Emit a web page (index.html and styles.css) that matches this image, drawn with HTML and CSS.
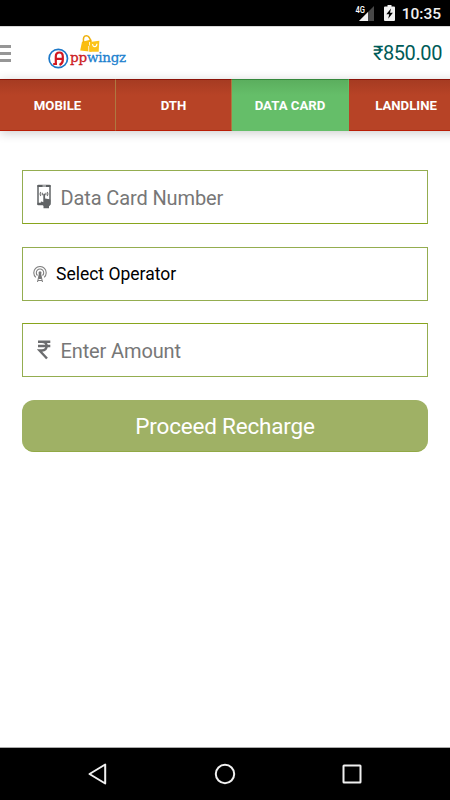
FILE: index.html
```html
<!DOCTYPE html>
<html lang="en">
<head>
<meta charset="utf-8">
<title>Appwingz Recharge</title>
<link rel="stylesheet" href="styles.css">
</head>
<body>
<div class="screen">
  <div class="status">
    <svg class="signal" width="20" height="18" viewBox="0 0 20 18">
      <path d="M19 1V16H4Z" fill="#484848"/>
      <path d="M13 7V16H4Z" fill="#f2f2f2"/>
      <text class="network" x="0.500" y="7.500" textLength="9.500" lengthAdjust="spacingAndGlyphs">4G</text>
    </svg>
    <svg class="battery" width="11" height="16" viewBox="0 0 11 16">
      <path d="M3.500 0h4v1.500H10a1 1 0 0 1 1 1V15a1 1 0 0 1-1 1H1a1 1 0 0 1-1-1V2.500a1 1 0 0 1 1-1h2.500z" fill="#f2f2f2"/>
      <path d="M7 3.500 2.300 9.300h2.900l-1 4.500L8.900 7.800H6z" fill="#000"/>
    </svg>
    <span class="clock">10:35</span>
  </div>
  <header class="header">
    <div class="menu"><i></i><i></i><i></i></div>
    <div class="logo">
      <svg width="22" height="36" viewBox="0 0 22 36">
        <circle cx="10.300" cy="24.500" r="9.200" fill="#fff" stroke="#1c78c8" stroke-width="1.700"/>
        <path d="M7.800 30.500V22.500C7.800 20 9 18.500 11.500 18.500C14.500 18.500 14.800 20.500 14.800 22.500V26Q14.800 29.500 11.500 31M7.800 24.800h6.600M5.200 30h3.800" fill="none" stroke="#d01820" stroke-width="2.200"/>
      </svg>
      <div class="word">
        <svg width="22" height="20" viewBox="0 0 22 20">
          <path d="M3 7.800 12.500 5.500V17.800L1.200 16.500Z" fill="#fabd10"/>
          <path d="M4.600 8.500C3.800 3.500 5 1.800 7.400 1.800S11 3.500 11.800 8" fill="none" stroke="#efb20e" stroke-width="1.600"/>
          <path d="M11 8 20.300 6.800 19.700 17.700 10.500 17.700Z" fill="#fcc41c"/>
          <path d="M13.600 10c0 3.600 4.300 3.600 4.300-.3" fill="none" stroke="#fff" stroke-width="1.100"/>
          <path d="M10.500 8v3.500M9.700 12v5.700" stroke="#fff" stroke-width=".8"/>
        </svg>
        <div class="brand"><span class="red">pp</span><span class="blue">wingz</span></div>
      </div>
    </div>
    <span class="balance">₹850.00</span>
  </header>
  <nav class="tabs">
    <div class="tab">MOBILE</div>
    <div class="tab">DTH</div>
    <div class="tab active">DATA CARD</div>
    <div class="tab">LANDLINE</div>
  </nav>
  <main class="form">
    <div class="field first">
      <svg class="phone" width="16" height="26" viewBox="0 0 16 26">
        <rect x="1" y="1.500" width="12" height="19" rx=".6" fill="#fff" stroke="#6b6e70" stroke-width="1.600"/>
        <path d="M.5 2h13M.5 19.800h6" stroke="#5d6062" stroke-width="2.200"/>
        <path d="M5.500 2h3.500" stroke="#eee" stroke-width="1"/>
        <path d="M3.700 8q-1.300 2 0 4M10.300 8q1.300 2 0 4M5.500 8.700q-.6 1.300 0 2.600M8.700 8.700q.6 1.300 0 2.600" fill="none" stroke="#777" stroke-width="1.200"/>
        <path d="M6.300 10q1-1 1.800 0V14.500l4.500.8q1 .2.900 1.500l-.5 4.500-1 1v2H6.500V22L3.500 18.300q.5-1.500 2.800 0z" fill="#606365"/>
      </svg>
      <span class="hint">Data Card Number</span>
    </div>
    <div class="field select">
      <svg class="tower" width="14" height="17" viewBox="0 0 14 17">
        <g fill="none" stroke="#808080" stroke-width="1.100">
          <path d="M2.800 11.300A6.200 6.200 0 1 1 11.200 11.300"/>
          <path d="M4.500 9.500A3.700 3.700 0 1 1 9.500 9.500"/>
          <path d="M6.600 7 4.500 16M7.400 7 9.500 16M5.600 12h2.800M5 14.500h4"/>
        </g>
        <circle cx="7" cy="6.700" r="1.500" fill="#777"/>
        <path d="M6.200 7h1.600L8.500 13h-3z" fill="#777"/>
      </svg>
      <span class="value">Select Operator</span>
    </div>
    <div class="field amount">
      <svg class="rupee" width="14" height="20" viewBox="0 0 14 20">
        <path d="M1 1.700h12.300M1 6h12.300M1 1.700h4C11.300 1.700 11.300 10.500 5 10.500H2.500L10 18.500" fill="none" stroke="#6b6c6e" stroke-width="2.400"/>
      </svg>
      <span class="hint">Enter Amount</span>
    </div>
    <button class="proceed">Proceed Recharge</button>
  </main>
  <footer class="navbar">
    <svg width="22" height="22" viewBox="0 0 22 22"><path d="M18.200 1.500V20.500L2.500 11Z"/></svg>
    <svg width="22" height="22" viewBox="0 0 22 22"><circle cx="11" cy="11" r="9.200"/></svg>
    <svg width="22" height="22" viewBox="0 0 22 22"><rect x="2.500" y="2.500" width="17" height="17" rx=".5"/></svg>
  </footer>
</div>
</body>
</html>
```
FILE: styles.css
```css
* { box-sizing: border-box; }
body {
  margin: 0;
  background: #fff;
  font-family: Roboto, "Noto Sans", sans-serif;
}
.screen {
  width: 450px;
  height: 800px;
  display: flex;
  flex-direction: column;
  overflow: hidden;
}
.status {
  height: 26px;
  flex: none;
  display: flex;
  align-items: flex-start;
  padding: 5px 9px 0 0;
  justify-content: flex-end;
  background: #000;
}
.signal { margin-right: 9px; }
.network { font-size: 8.5px; font-weight: 500; fill: #fff; }
.battery { margin-right: 7px; }
.clock {
  color: #f0f0f0;
  font-size: 15.5px;
  font-weight: 500;
  line-height: 18px;
}
.header {
  height: 53px;
  flex: none;
  display: flex;
  align-items: flex-start;
  border-top: 1px solid #d8d8d8;
}
.menu {
  width: 11px;
  padding-top: 18px;
  display: grid;
  gap: 4px;
}
.menu i { height: 3px; background: #969696; }
.logo {
  display: flex;
  margin: 7px 0 0 37px;
}
.word {
  display: flex;
  flex-direction: column;
}
.word svg { margin: 0 0 -7px 9px; }
.brand {
  display: flex;
  font-family: "DejaVu Serif", serif;
  font-size: 13.5px;
  font-weight: 400;
  line-height: 20px;
  letter-spacing: -.1px;
  -webkit-text-stroke: .3px currentColor;
}
.red { color: #cc1821; }
.blue { color: #2080ce; letter-spacing: -.3px; }
.balance {
  margin: 14px 8px 0 auto;
  font-size: 20px;
  line-height: 24px;
  letter-spacing: -.4px;
  color: #005b58;
}
.tabs {
  height: 52px;
  flex: none;
  display: flex;
  box-shadow: 0 2px 10px rgba(0, 0, 0, .2);
  width: 466px;
}
.tab {
  width: 116px;
  flex: none;
  border-right: 1px solid #ae7941;
  border-top: 1px solid #8c1208;
  border-bottom: 1px solid #b91e06;
  background: linear-gradient(#a63b22, #b74326 30%, #b74326);
  color: #fff;
  font-size: 13.2px;
  font-weight: 700;
  line-height: 51px;
  text-align: center;
}
.tab:last-child { padding-right: 1px; }
.tab.active {
  width: 117px;
  background: linear-gradient(#5bae5e, #65be69 30%, #65be69);
  border-top-color: #35883c;
  border-bottom-color: #65be69;
  border-right-color: #65be69;
}
.form {
  flex: 1;
  padding: 39px 22px 0;
}
.field {
  height: 54px;
  margin-bottom: 23px;
  border: 1px solid #94ad50;
  display: flex;
  align-items: center;
}
.field.first { border-bottom-color: #88a51c; }
.field.select { margin-bottom: 22px; }
.field.amount { border-top-color: #88a51c; }
.phone { margin: 0 7.5px 0 14px; }
.tower { margin: 0 9px 0 10px; }
.rupee { margin: 0 9.5px 0 14px; }
.hint {
  font-size: 20px;
  color: #777;
  line-height: 24px;
  padding-top: 2px;
  letter-spacing: -.12px;
}
.value { font-size: 17.5px; color: #000; line-height: 22px; }
.proceed {
  display: block;
  width: 100%;
  height: 52px;
  padding: 0;
  border: 0;
  border-bottom: 1px solid #91a945;
  border-radius: 12px;
  background: #9fb165;
  color: #fff;
  font: 22.5px Roboto, sans-serif;
  letter-spacing: -.2px;
}
.navbar {
  height: 53px;
  flex: none;
  border-top: 1px solid #aaa;
  background: #000;
  display: flex;
  justify-content: center;
  align-items: center;
  gap: 105px;
}
.navbar path, .navbar circle, .navbar rect {
  fill: none;
  stroke: #f0f0f0;
  stroke-width: 2;
  stroke-linejoin: round;
}
```
